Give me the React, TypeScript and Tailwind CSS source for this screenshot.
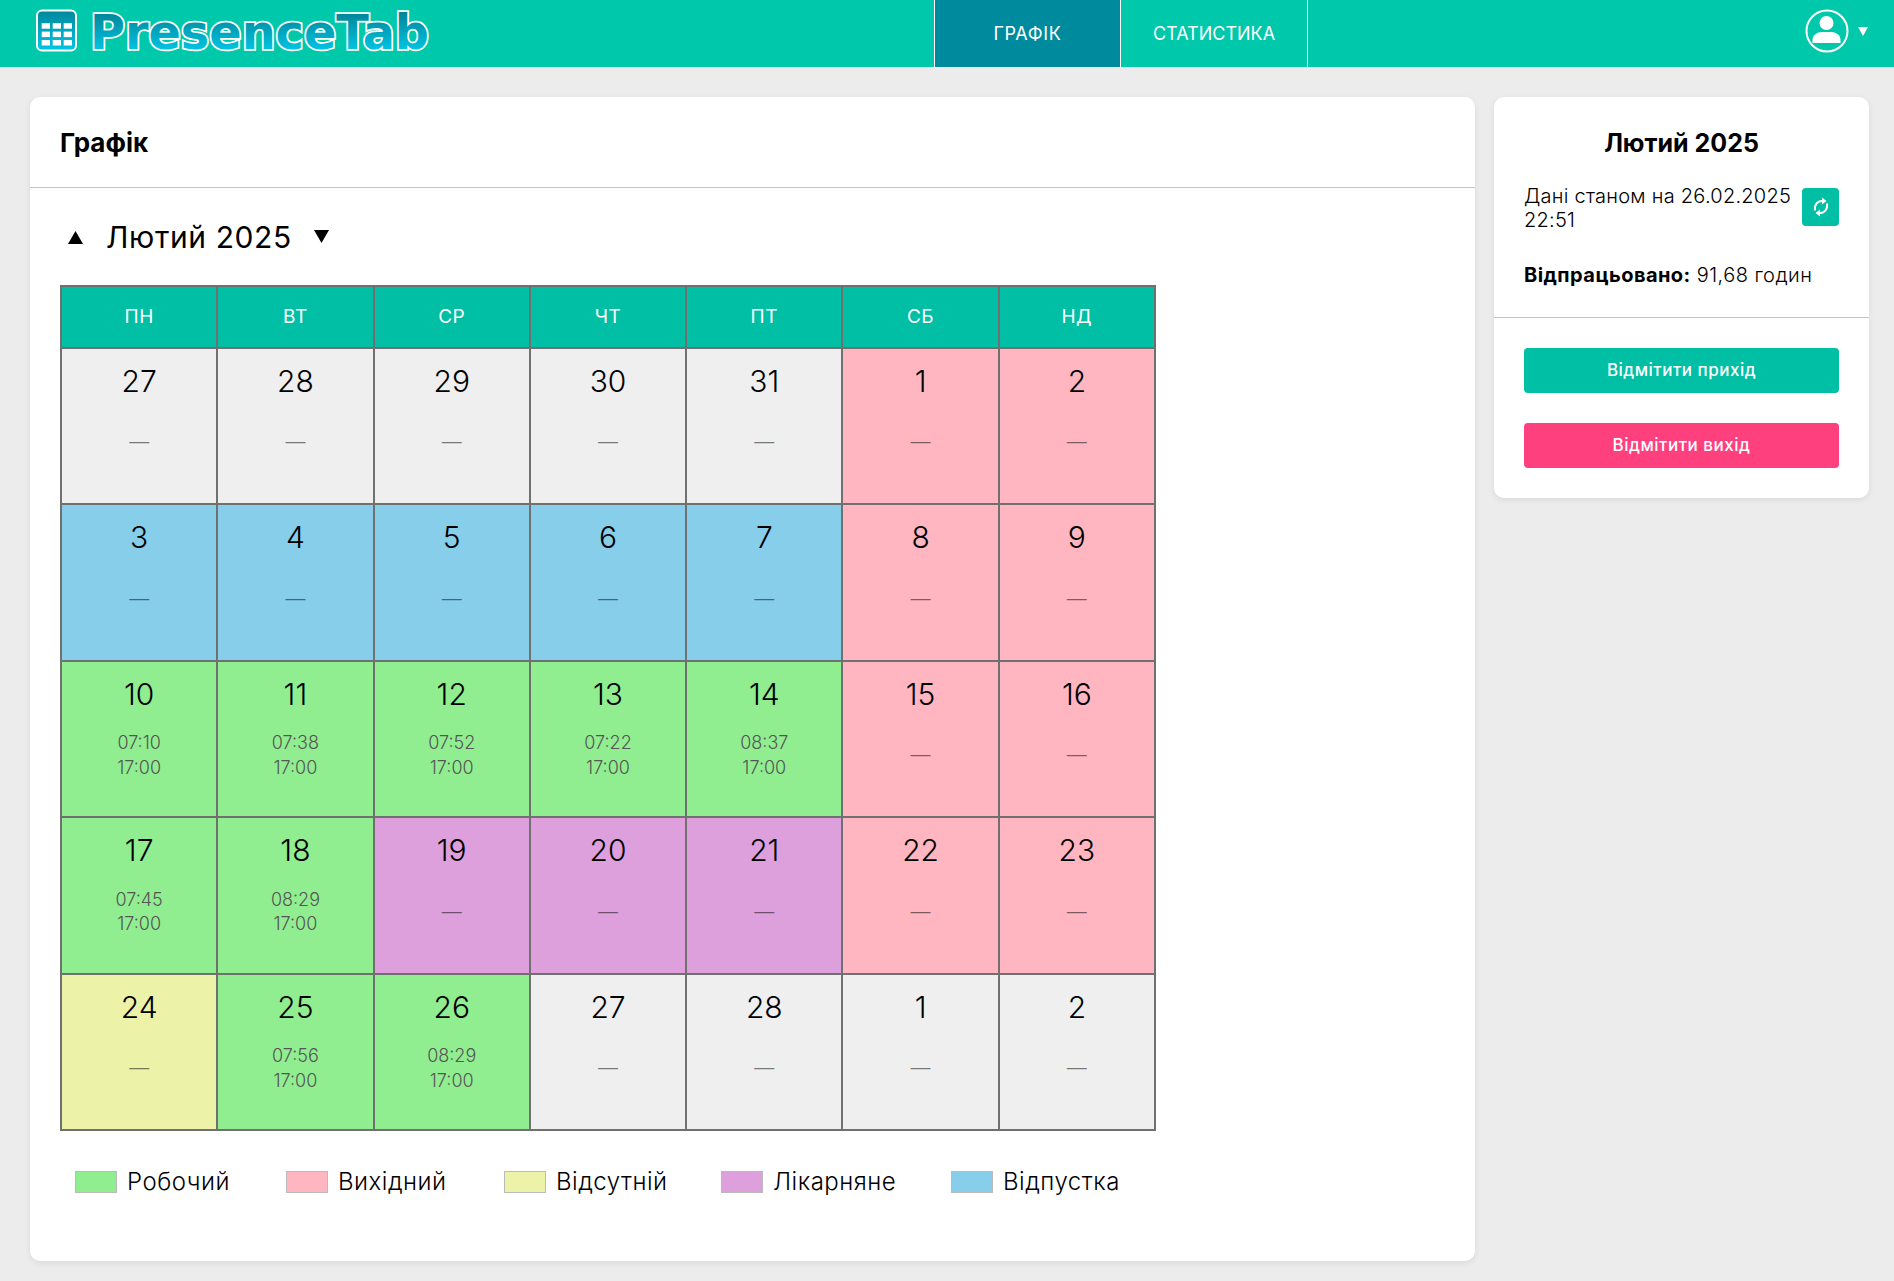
import React from "react";

type Kind = "off" | "vac" | "work" | "rest" | "sick" | "abs";
const bg: Record<Kind, string> = {
  off: "bg-[#efefef]",
  vac: "bg-[#87ceeb]",
  work: "bg-[#90ee90]",
  rest: "bg-[#ffb6c1]",
  sick: "bg-[#dda0dd]",
  abs: "bg-[#ecf2a8]",
};
const days: [string, Kind, string?][] = [
  ["27", "off"], ["28", "off"], ["29", "off"], ["30", "off"], ["31", "off"], ["1", "rest"], ["2", "rest"],
  ["3", "vac"], ["4", "vac"], ["5", "vac"], ["6", "vac"], ["7", "vac"], ["8", "rest"], ["9", "rest"],
  ["10", "work", "07:10"], ["11", "work", "07:38"], ["12", "work", "07:52"], ["13", "work", "07:22"], ["14", "work", "08:37"], ["15", "rest"], ["16", "rest"],
  ["17", "work", "07:45"], ["18", "work", "08:29"], ["19", "sick"], ["20", "sick"], ["21", "sick"], ["22", "rest"], ["23", "rest"],
  ["24", "abs"], ["25", "work", "07:56"], ["26", "work", "08:29"], ["27", "off"], ["28", "off"], ["1", "off"], ["2", "off"],
];
const heads = ["ПН", "ВТ", "СР", "ЧТ", "ПТ", "СБ", "НД"];
const legend: [string, Kind, string][] = [
  ["Робочий", "work", "w-[211px]"],
  ["Вихідний", "rest", "w-[218px]"],
  ["Відсутній", "abs", "w-[217px]"],
  ["Лікарняне", "sick", "w-[230px]"],
  ["Відпустка", "vac", "w-[170px]"],
];

function Logo() {
  return (
    <svg width="400" height="60" viewBox="0 0 400 60" className="block">
      <defs>
        <linearGradient id="lg" x1="0" y1="0" x2="0" y2="1">
          <stop offset="0" stopColor="#00879b" />
          <stop offset="1" stopColor="#00c6e4" />
        </linearGradient>
        <linearGradient id="lt" gradientUnits="userSpaceOnUse" x1="0" y1="10" x2="0" y2="47">
          <stop offset="0" stopColor="#00879b" />
          <stop offset="1" stopColor="#00c6e4" />
        </linearGradient>
      </defs>
      <rect x="2" y="6.5" width="39" height="40" rx="5" fill="url(#lg)" stroke="#fff" strokeWidth="2" />
      {[0, 1, 2].map((r) =>
        [0, 1, 2].map((c) => (
          <rect key={`${r}-${c}`} x={6.7 + c * 11} y={19.2 + r * 8.4} width="8.3" height="5.5" fill="#fff" />
        ))
      )}
      <text
        x="55"
        y="45"
        textLength="339"
        lengthAdjust="spacingAndGlyphs"
        fontFamily="'DejaVu Sans', sans-serif"
        fontWeight="700"
        fontSize="48"
        fill="url(#lt)"
        stroke="#fff"
        strokeWidth="3.5"
        strokeLinejoin="miter"
        paintOrder="stroke"
      >
        PresenceTab
      </text>
    </svg>
  );
}

export default function App() {
  return (
    <div className="min-h-[1281px] bg-[#ececec] font-[Inter,sans-serif] text-black">
      <header className="flex h-[67px] items-stretch bg-[#00c8aa]">
        <div className="flex w-[934px] items-center pl-[35px]">
          <Logo />
        </div>
        <nav className="flex border-l border-white text-[18px] text-white">
          <div className="flex w-[186px] items-center justify-center border-r border-white bg-[#008a9e] tracking-[0.6px]">ГРАФІК</div>
          <div className="flex w-[187px] items-center justify-center border-r border-white">СТАТИСТИКА</div>
        </nav>
        <div className="ml-auto flex items-center gap-[9px] pr-[26px] pb-[5px]">
          <svg width="44" height="44" viewBox="0 0 44 44">
            <circle cx="22" cy="22" r="20.5" fill="none" stroke="#fff" strokeWidth="2" />
            <circle cx="21.5" cy="14" r="7" fill="#fff" />
            <path d="M7.5 34 V31 C7.5 26 12 23 17 23 H26 C31 23 35.5 26 35.5 31 V34 Z" fill="#fff" />
          </svg>
          <svg width="10" height="9" viewBox="0 0 10 9"><path d="M0 0 H10 L5 9 Z" fill="#fff" /></svg>
        </div>
      </header>

      <main className="flex items-start gap-[19px] pt-[30px] pr-[25px] pl-[30px]">
        <section className="h-[1164px] w-[1445px] rounded-[10px] bg-white shadow-[0_2px_6px_rgba(0,0,0,0.08)]">
          <h1 className="flex h-[91px] items-center border-b border-[#c4c4c4] pl-[30px] text-[26px] font-bold">Графік</h1>
          <div className="flex h-[97px] items-center pt-[2px] pl-[38px]">
            <svg width="15" height="13" viewBox="0 0 15 13"><path d="M7.5 0 L15 13 H0 Z" fill="#000" /></svg>
            <span className="ml-[23px] text-[30px] tracking-[0.6px]">Лютий 2025</span>
            <svg className="mb-[2px] ml-[22px]" width="15" height="13" viewBox="0 0 15 13"><path d="M0 0 H15 L7.5 13 Z" fill="#000" /></svg>
          </div>
          <div className="ml-[30px] grid w-[1096px] grid-cols-7 border-t-2 border-l-2 border-[#707070]">
            {heads.map((h) => (
              <div key={h} className="flex h-[61.5px] items-center justify-center border-r-2 border-b-2 border-[#707070] bg-[#00bfa5] pt-[1px] text-[19px] tracking-[0.5px] text-white">
                {h}
              </div>
            ))}
            {days.map(([n, k, t], i) => (
              <div key={i} className={`h-[156.5px] border-r-2 border-b-2 border-[#707070] pt-[12px] text-center ${bg[k]}`}>
                <div className="text-[30px] leading-[40px] font-light">{n}</div>
                <div className="mt-[17px] flex h-[50px] flex-col items-center justify-center text-[18px] leading-[24.5px] font-light">
                  {t ? (
                    <>
                      <span className="text-[#555]">{t}</span>
                      <span className="text-[#555]">17:00</span>
                    </>
                  ) : (
                    <span className="text-[20px] text-black/50">—</span>
                  )}
                </div>
              </div>
            ))}
          </div>
          <div className="mt-[36px] flex pl-[45px]">
            {legend.map(([l, k, w]) => (
              <div key={l} className={`flex items-center ${w}`}>
                <span className={`h-[22px] w-[42px] border border-[#bbb] ${bg[k]}`} />
                <span className="ml-[10px] text-[24px] leading-[30px] tracking-[0.5px] font-light">{l}</span>
              </div>
            ))}
          </div>
        </section>

        <aside className="w-[375px] rounded-[10px] bg-white shadow-[0_2px_6px_rgba(0,0,0,0.08)]">
          <h2 className="pt-[26px] text-center text-[25px] leading-[40px] font-bold">Лютий 2025</h2>
          <div className="mt-[21px] flex items-start justify-between px-[30px]">
            <p className="w-[275px] text-[20px] leading-[24px] tracking-[0.25px] font-light">Дані станом на 26.02.2025 22:51</p>
            <button className="mt-[4px] flex h-[38px] w-[37px] items-center justify-center rounded-[4px] bg-[#00bfa5]">
              <svg width="16" height="20" viewBox="0 0 16 20" fill="none">
                <path d="M2 13.5 C1 8 4.5 4 9 4" stroke="#fff" strokeWidth="2" />
                <path d="M9 0.5 L13.5 4 L9 7.5 Z" fill="#fff" />
                <path d="M14 6.5 C15 12 11.5 16 7 16" stroke="#fff" strokeWidth="2" />
                <path d="M7 19.5 L2.5 16 L7 12.5 Z" fill="#fff" />
              </svg>
            </button>
          </div>
          <p className="mt-[31px] pl-[30px] text-[20px] leading-[24px] tracking-[0.45px] font-light"><b className="font-bold">Відпрацьовано:</b> 91,68 годин</p>
          <div className="mt-[30px] border-t border-[#c4c4c4]" />
          <div className="flex flex-col gap-[30px] p-[30px]">
            <button className="h-[45px] rounded-[4px] bg-[#00bfa5] text-[17px] tracking-[0.5px] font-medium text-white">Відмітити прихід</button>
            <button className="h-[45px] rounded-[4px] bg-[#ff407f] text-[17px] tracking-[0.5px] font-medium text-white">Відмітити вихід</button>
          </div>
        </aside>
      </main>
    </div>
  );
}
